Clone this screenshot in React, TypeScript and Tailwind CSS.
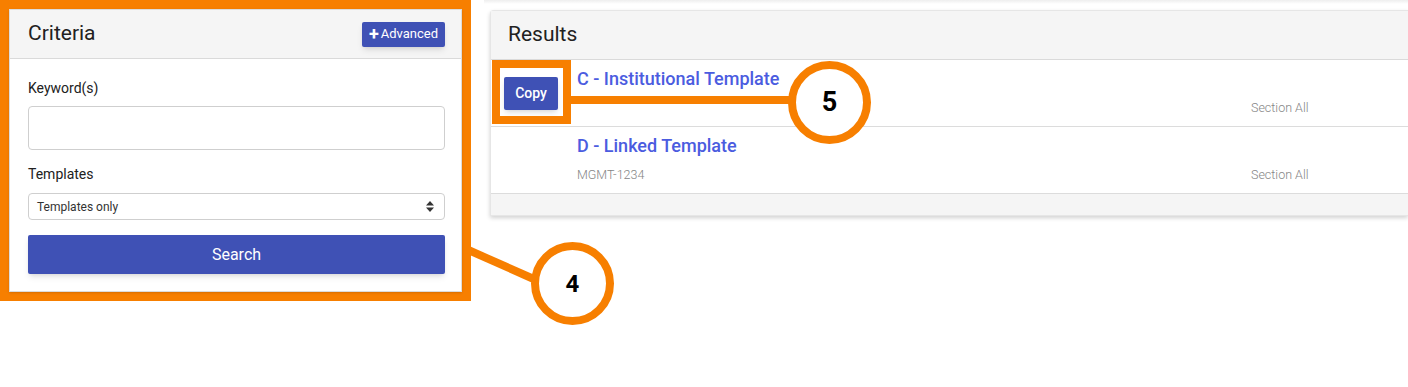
import React from 'react';

const ORANGE = '#f77f00';

const rows = [
  { title: 'C - Institutional Template', code: '', section: 'Section All', copy: true },
  { title: 'D - Linked Template', code: 'MGMT-1234', section: 'Section All', copy: false },
];

const Callout: React.FC<{ n: string; className: string; size: string }> = ({ n, className, size }) => (
  <div
    className={`absolute w-[83px] h-[83px] rounded-full border-[8px] border-[#f77f00] bg-white flex items-center justify-center font-bold text-black ${size} ${className}`}
  >
    {n}
  </div>
);

const App: React.FC = () => {
  return (
    <div
      className="relative w-[1408px] h-[387px] bg-white overflow-hidden text-[#212121]"
      style={{ fontFamily: 'Roboto, "Liberation Sans", Arial, sans-serif' }}
    >
      <div className="flex items-start">
        {/* criteria, highlighted */}
        <div className="w-[471px] border-[9px] border-[#f77f00] shrink-0">
          <div className="bg-white border border-[#dcdcdc] shadow-sm">
            <div className="h-[49px] bg-[#f5f5f5] border-b border-[#dadada] flex items-center justify-between pl-[18px] pr-[16px]">
              <span className="text-[21px]">Criteria</span>
              <button className="h-[25px] px-[7px] bg-[#3f51b5] text-white text-[13px] rounded-[2px] shadow-md flex items-center gap-[2px]">
                <span className="text-[18px] font-bold leading-none -mt-[1px]">+</span>
                Advanced
              </button>
            </div>
            <div className="pl-[18px] pr-[16px] pt-[19px] pb-[17px]">
              <div className="text-[14px] leading-[20px]">Keyword(s)</div>
              <div className="mt-[8px] h-[44px] border border-[#cfcfcf] rounded-[4px] bg-white" />
              <div className="mt-[14px] text-[14px] leading-[20px]">Templates</div>
              <div className="mt-[9px] h-[27px] border border-[#cfcfcf] rounded-[4px] bg-white flex items-center justify-between pl-[8px] pr-[10px]">
                <span className="text-[12px] text-[#333]">Templates only</span>
                <svg width="8" height="11" viewBox="0 0 8 11">
                  <path d="M4 0 L8 4.5 H0 Z" fill="#333" />
                  <path d="M4 11 L8 6.5 H0 Z" fill="#333" />
                </svg>
              </div>
              <button className="mt-[15px] w-full h-[39px] bg-[#3f51b5] text-white text-[16px] rounded-[2px] shadow-md">
                Search
              </button>
            </div>
          </div>
        </div>

        {/* results */}
        <div className="flex-1 ml-[19px]">
          <div className="h-[4px] -mx-[6px] bg-gradient-to-b from-[#eeeeee] to-white" />
          <div className="mt-[6px] bg-white rounded-tl-[4px] shadow-[0_2px_4px_rgba(0,0,0,0.18)] border border-[#e6e6e6] border-r-0">
            <div className="h-[49px] bg-[#f5f5f5] border-b border-[#dadada] flex items-center pl-[17px]">
              <span className="text-[21px]">Results</span>
            </div>
            {rows.map((r, i) => (
              <div key={i} className="h-[67px] border-b border-[#dcdcdc] flex">
                <div className="w-[86px] shrink-0 flex items-center pl-[13px]">
                  {r.copy && (
                    <button className="w-[54px] h-[33px] bg-[#3f51b5] text-white text-[14px] font-medium rounded-[2px] shadow-md">
                      Copy
                    </button>
                  )}
                </div>
                <div className="flex-1 pt-[6px]">
                  <div className="text-[18px] leading-[25px] text-[#4b5ce0] font-medium">{r.title}</div>
                  <div className="mt-[9px] flex text-[12.5px] leading-[16px] text-[#858585] font-light">
                    <span className="w-[674px]">{r.code}</span>
                    <span>{r.section}</span>
                  </div>
                </div>
              </div>
            ))}
            <div className="h-[21px] bg-[#f5f5f5]" />
          </div>
        </div>
      </div>

      {/* annotations */}
      <div className="absolute left-[492px] top-[60px] w-[79px] h-[64px] border-[8px] border-[#f77f00]" />
      <svg className="absolute inset-0 pointer-events-none" width="1408" height="387">
        <rect x="569" y="96" width="224" height="8" fill={ORANGE} />
        <line x1="466" y1="249" x2="536" y2="280" stroke={ORANGE} strokeWidth="8" />
      </svg>
      <Callout n="5" size="text-[27px]" className="left-[788px] top-[61px]" />
      <Callout n="4" size="text-[24px]" className="left-[531px] top-[242px]" />
    </div>
  );
};

export default App;
